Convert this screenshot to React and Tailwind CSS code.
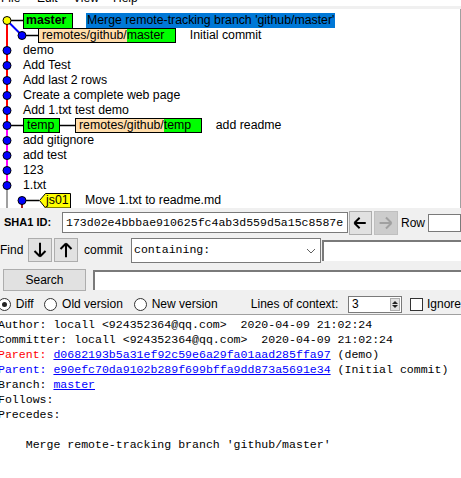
import React from "react";

const SANS = { fontFamily: '"Liberation Sans", Arial, sans-serif' };
const MONO = { fontFamily: '"Liberation Mono", "Courier New", monospace' };

const rowY = (i) => 11.5 + 15 * i;

function Graph() {
  const plainRows = [2, 3, 4, 5, 6, 8, 9, 10, 11];
  return (
    <svg className="absolute left-0 top-0" width="461" height="199">
      <line x1="7" y1={rowY(0)} x2="7" y2={rowY(7)} stroke="#ff0000" strokeWidth="2" />
      <line x1="7" y1={rowY(7)} x2="7" y2={rowY(11)} stroke="#ff00ff" strokeWidth="2" />
      <line x1="7" y1={rowY(11)} x2="7" y2="199" stroke="#a0a0a0" strokeWidth="2" />
      <line x1="7" y1={rowY(0)} x2="22" y2={rowY(1)} stroke="#0000ff" strokeWidth="2" />
      <line x1="22" y1={rowY(12)} x2="22" y2="199" stroke="#a52222" strokeWidth="2" />
      <line x1="11" y1={rowY(0)} x2="23" y2={rowY(0)} stroke="#000" strokeWidth="1.5" />
      <line x1="22" y1={rowY(1)} x2="38" y2={rowY(1)} stroke="#000" strokeWidth="1.5" />
      <line x1="7" y1={rowY(7)} x2="23" y2={rowY(7)} stroke="#000" strokeWidth="1.5" />
      <line x1="60" y1={rowY(7)} x2="75" y2={rowY(7)} stroke="#000" strokeWidth="1.5" />
      <line x1="22" y1={rowY(12)} x2="39" y2={rowY(12)} stroke="#000" strokeWidth="1.5" />
      <polygon
        points={`39.5,${rowY(12)} 45.5,184.5 70.5,184.5 70.5,199 45.5,199`}
        fill="#ffff00"
        stroke="#000"
        strokeWidth="1"
      />
      <circle cx="7" cy={rowY(0)} r="4" fill="#ffff00" stroke="#000" strokeWidth="1" />
      <circle cx="22" cy={rowY(1)} r="4" fill="#0000ff" stroke="#000" strokeWidth="1" />
      {[...plainRows, 7].map((i) => (
        <circle key={i} cx="7" cy={rowY(i)} r="4" fill="#0000ff" stroke="#000" strokeWidth="1" />
      ))}
      <circle cx="22" cy={rowY(12)} r="4" fill="#0000ff" stroke="#000" strokeWidth="1" />
    </svg>
  );
}

function RemoteTag({ branch, greenW }) {
  return (
    <span className="flex h-[15px] items-center border border-black">
      <span className="flex h-full items-center bg-[#ffddaa] pl-[3px]">remotes/github/</span>
      <span className="flex h-full items-center bg-[#00ff00] pr-[4px]" style={{ width: greenW }}>
        {branch}
      </span>
    </span>
  );
}

function ArrowBtn({ dir, disabled, w = 24 }) {
  const c = disabled ? "#a0a0a0" : "#000";
  let d;
  if (dir === "left") d = "M5 12 H18 M5 12 L11 6 M5 12 L11 18";
  if (dir === "right") d = "M5 12 H18 M18 12 L12 6 M18 12 L12 18";
  if (dir === "down") d = "M12 4 V19 M12 19 L6 13 M12 19 L18 13";
  if (dir === "up") d = "M12 5 V20 M12 5 L6 11 M12 5 L18 11";
  return (
    <div
      className={`flex h-[24px] items-center justify-center border ${
        disabled ? "border-[#bfbfbf] bg-[#cccccc]" : "border-[#adadad] bg-[#e1e1e1]"
      }`}
      style={{ width: w }}
    >
      <svg width="24" height="24" viewBox="0 0 24 24">
        <path d={d} stroke={c} strokeWidth="2.2" fill="none" />
      </svg>
    </div>
  );
}

export default function App() {
  const text = [
    { k: "Author: locall <924352364@qq.com>  2020-04-09 21:02:24" },
    { k: "Committer: locall <924352364@qq.com>  2020-04-09 21:02:24" },
    { label: "Parent: ", color: "text-[#ff0000]", link: "d0682193b5a31ef92c59e6a29fa01aad285ffa97", rest: " (demo)" },
    { label: "Parent: ", color: "text-[#0000ff]", link: "e90efc70da9102b289f699bffa9dd873a5691e34", rest: " (Initial commit)" },
    { label: "Branch: ", color: "text-black", link: "master", rest: "" },
    { k: "Follows:" },
    { k: "Precedes:" },
    { k: " " },
    { k: "    Merge remote-tracking branch 'github/master'" },
  ];

  return (
    <div className="h-[478px] w-[461px] overflow-hidden bg-white text-black" style={SANS}>
      {/* menu bar, scrolled mostly out of view */}
      <div className="h-[6px] overflow-hidden bg-white">
        <div className="-mt-[9px] flex pl-[1px] text-[12px] leading-[15px]">
          <span className="w-[36px]">File</span>
          <span className="w-[36px]">Edit</span>
          <span className="w-[40px]">View</span>
          <span>Help</span>
        </div>
      </div>
      <div className="h-[3px] bg-[#f0f0f0]" />

      {/* commit graph */}
      <div className="relative h-[199px] overflow-hidden border-r border-[#a0a0a0] bg-white pt-[4px] text-[12.3px]">
        <Graph />
        <div className="relative flex h-[15px] items-center pl-[23px]">
          <span className="flex h-[16px] w-[50px] items-center border border-black bg-[#00ff00] pl-[2px] font-bold">
            master
          </span>
          <span className="ml-[13px] flex h-[15px] w-[249px] items-center bg-[#0078d7] pl-[1px]">
            Merge remote-tracking branch 'github/master'
          </span>
        </div>
        <div className="relative flex h-[15px] items-center pl-[38px]">
          <RemoteTag branch="master" greenW={48} />
          <span className="ml-[14px]">Initial commit</span>
        </div>
        {["demo", "Add Test", "Add last 2 rows", "Create a complete web page", "Add 1.txt test demo"].map((t) => (
          <div key={t} className="relative flex h-[15px] items-center pl-[23px]">
            {t}
          </div>
        ))}
        <div className="relative flex h-[15px] items-center pl-[23px]">
          <span className="flex h-[15px] w-[37px] items-center border border-black bg-[#00ff00] pl-[3px]">
            temp
          </span>
          <span className="ml-[15px]">
            <RemoteTag branch="temp" greenW={37} />
          </span>
          <span className="ml-[14px]">add readme</span>
        </div>
        {["add gitignore", "add test", "123", "1.txt"].map((t) => (
          <div key={t} className="relative flex h-[15px] items-center pl-[23px]">
            {t}
          </div>
        ))}
        <div className="relative flex h-[15px] items-center pl-[46px]">
          <span className="w-[39px]">js01</span>
          <span>Move 1.txt to readme.md</span>
        </div>
      </div>

      {/* controls */}
      <div className="bg-[#f0f0f0] text-[12px]">
        <div className="flex h-[29px] items-center">
          <span className="ml-[4px] w-[58px] text-[11px] font-bold">SHA1 ID:</span>
          <div
            className="flex h-[21px] w-[286px] items-center border border-[#7a7a7a] bg-white pl-[3px] text-[11.55px]"
            style={MONO}
          >
            173d02e4bbbae910625fc4ab3d559d5a15c8587e
          </div>
          <div className="ml-[1px]">
            <ArrowBtn dir="left" w={23} />
          </div>
          <div className="ml-[2px]">
            <ArrowBtn dir="right" disabled />
          </div>
          <span className="ml-[3px] w-[27px]">Row</span>
          <div className="h-[18px] flex-1 border border-[#7a7a7a] bg-white" />
        </div>

        <div className="flex h-[26px] items-center">
          <span className="w-[28px]">Find</span>
          <ArrowBtn dir="down" />
          <div className="ml-[2px]">
            <ArrowBtn dir="up" />
          </div>
          <span className="ml-[6px] w-[47px]">commit</span>
          <div className="relative flex h-[25px] w-[190px] items-center border border-[#7a7a7a] bg-white pl-[2px] text-[11.55px]" style={MONO}>
            containing:
            <svg className="absolute right-[4px] top-[9px]" width="10" height="6">
              <polyline points="1,1 5,5 9,1" fill="none" stroke="#606060" strokeWidth="1" />
            </svg>
          </div>
          <div className="ml-[1px] h-[21px] flex-1 border-l-2 border-t-2 border-[#7a7a7a] bg-white" />
        </div>

        <div className="flex h-[31px] items-start pt-[6px]">
          <div className="ml-[3px] flex h-[22px] w-[83px] items-center justify-center border border-[#adadad] bg-[#e1e1e1] text-[12px]">
            Search
          </div>
          <div className="ml-[7px] mt-[1px] h-[20px] flex-1 border-l-2 border-t-2 border-[#7a7a7a] bg-white" />
        </div>

        <div className="flex h-[20px] items-center whitespace-nowrap">
          <span className="-ml-[2px] flex h-[13px] w-[13px] items-center justify-center rounded-full border border-[#333] bg-white">
            <span className="h-[5px] w-[5px] rounded-full bg-[#222]" />
          </span>
          <span className="ml-[5px] w-[29px]">Diff</span>
          <span className="h-[13px] w-[13px] rounded-full border border-[#333] bg-white" />
          <span className="ml-[5px] w-[73px]">Old version</span>
          <span className="h-[13px] w-[13px] rounded-full border border-[#333] bg-white" />
          <span className="ml-[5px] w-[101px]">New version</span>
          <span className="w-[99px]">Lines of context:</span>
          <div className="flex h-[17px] w-[55px] items-center border border-[#7a7a7a] bg-white">
            <span className="ml-[3px] flex-1">3</span>
            <div className="mr-[1px] flex h-[13px] w-[10px] flex-col border border-[#adadad] bg-[#e1e1e1]">
              <svg width="8" height="6" className="mx-auto">
                <polygon points="1,5 4,2 7,5" fill="#222" />
              </svg>
              <svg width="8" height="6" className="mx-auto">
                <polygon points="1,1 4,4 7,1" fill="#222" />
              </svg>
            </div>
          </div>
          <span className="ml-[8px] h-[13px] w-[13px] border border-[#333] bg-white" />
          <span className="ml-[4px]">Ignore</span>
        </div>
      </div>

      {/* commit details */}
      <div className="border-t border-[#a0a0a0] bg-white pt-[2px]">
        <div className="-ml-[2px] text-[11.55px] leading-[15px]" style={MONO}>
          {text.map((l, i) =>
            l.k ? (
              <div key={i} className="whitespace-pre">
                {l.k}
              </div>
            ) : (
              <div key={i} className="whitespace-pre">
                <span className={l.color}>{l.label}</span>
                <span className="text-[#0000ff] underline">{l.link}</span>
                {l.rest}
              </div>
            )
          )}
        </div>
      </div>
    </div>
  );
}
